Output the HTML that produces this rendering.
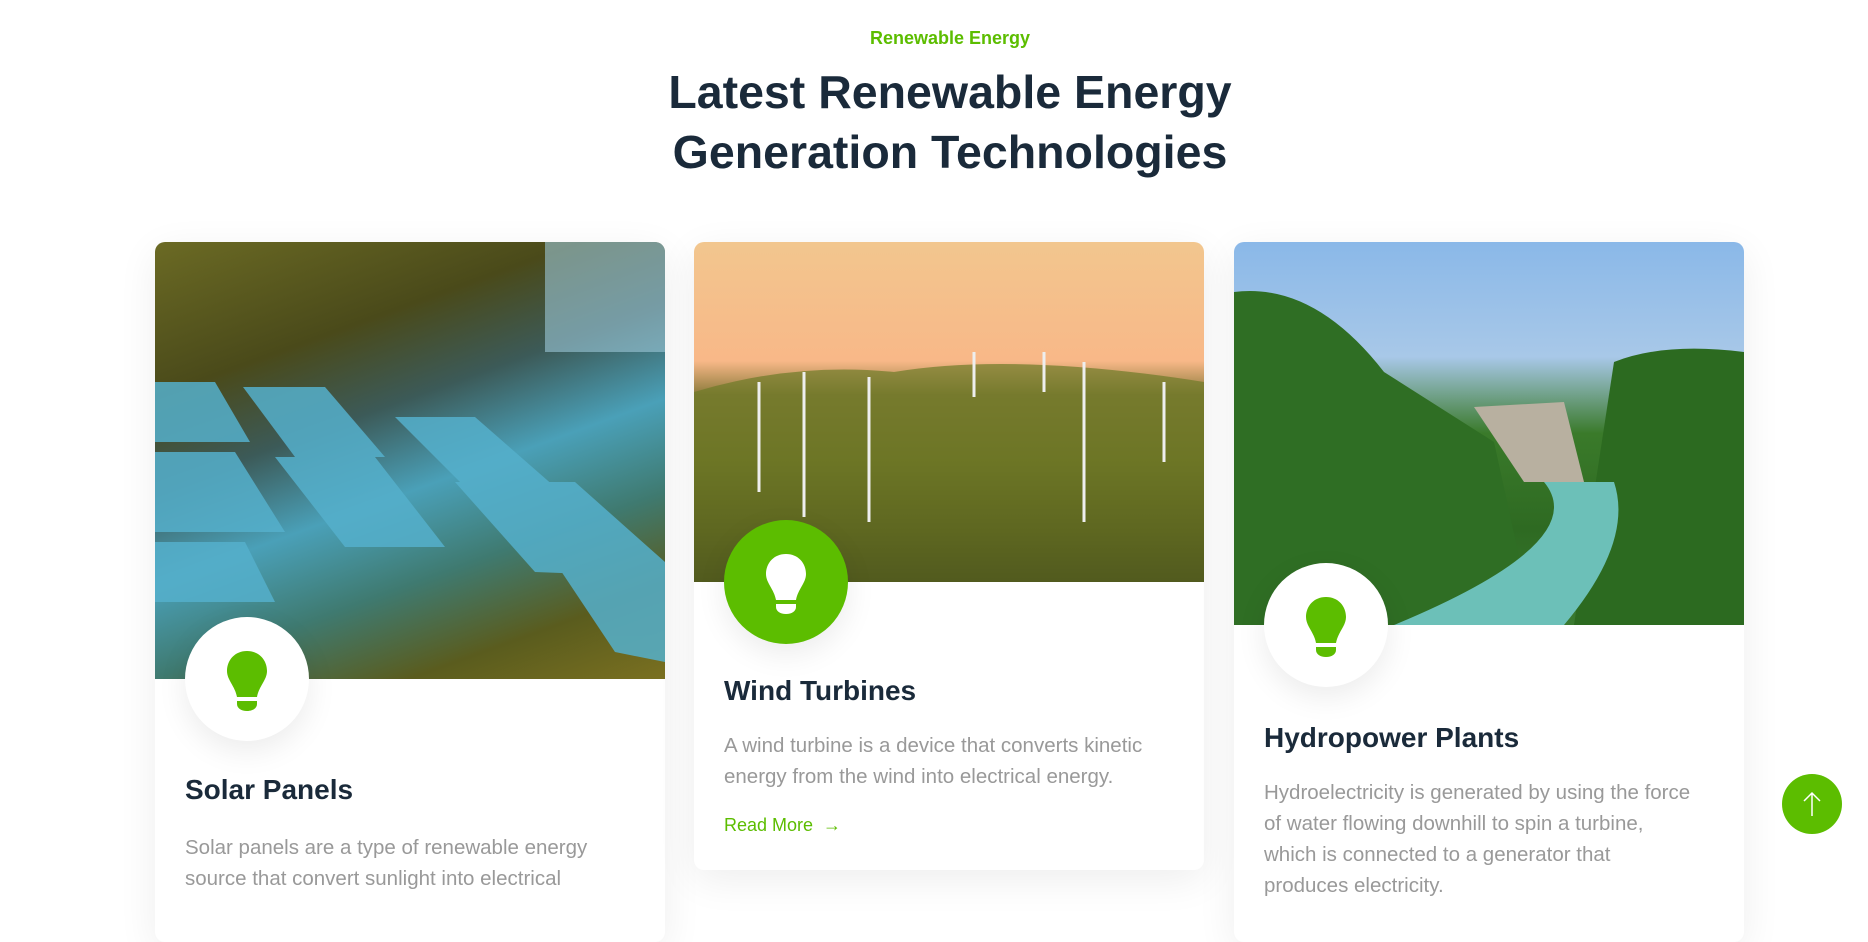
<!DOCTYPE html>
<html><head><meta charset="utf-8"><style>
*{margin:0;padding:0;box-sizing:border-box}
body{width:1868px;height:889px;overflow:hidden;background:#fff;font-family:"Liberation Sans",sans-serif;position:relative}
.sub{position:absolute;top:28px;left:0;width:1900px;text-align:center;color:#5cbd00;font-weight:bold;font-size:18px}
h1{position:absolute;top:62px;left:0;width:1900px;text-align:center;color:#1a2a3a;font-size:46.5px;line-height:60px;font-weight:bold}
.card{position:absolute;top:242px;width:510px;background:#fff;border-radius:10px;box-shadow:0 10px 40px rgba(0,0,0,.07);overflow:visible}
.img{position:absolute;left:0;top:0;width:510px;border-radius:10px 10px 0 0;overflow:hidden}
.ic{position:absolute;left:30px;width:124px;height:124px;border-radius:50%;background:#fff;box-shadow:0 10px 30px rgba(0,0,0,.08)}
.ic svg{position:absolute;left:40px;top:32px}
.card h3{position:absolute;left:30px;font-size:28px;color:#1a2a3a;font-weight:bold}
.card p{position:absolute;left:30px;width:432px;font-size:20.5px;line-height:31px;color:#999}
.rm{position:absolute;left:30px;color:#5cbd00;font-size:18px}
.top{position:absolute;left:1782px;top:774px;width:60px;height:60px;border-radius:50%;background:#5cbd00}
</style></head><body>
<div class="sub">Renewable Energy</div>
<h1>Latest Renewable Energy<br>Generation Technologies</h1>

<div class="card" style="left:155px;height:700px">
<div class="img" style="height:437px;background:linear-gradient(160deg,#6b6a24 0%,#4a4a1a 25%,#3c5a58 40%,#4aa0b8 55%,#3f7a70 70%,#5a5c1e 85%,#7a7020 100%)">
<svg width="510" height="437" style="position:absolute;left:0;top:0"><g fill="#55b0cc" opacity=".85"><polygon points="0,140 60,140 95,200 0,200"/><polygon points="88,145 170,145 230,215 140,215"/><polygon points="240,175 320,175 400,245 310,245"/><polygon points="0,210 80,210 130,290 0,290"/><polygon points="120,215 220,215 290,305 190,305"/><polygon points="300,240 420,240 510,320 510,335 380,330"/><polygon points="0,300 90,300 120,360 0,360"/><polygon points="400,320 510,330 510,420 460,410"/></g><rect x="390" y="0" width="120" height="110" fill="#9cc8d8" opacity=".6"/></svg>
</div>
<div class="ic" style="top:375px"><svg width="44" height="62" viewBox="0 0 44 62"><path d="M22 2C10 2 2 11 2 22c0 9 8 15 10 26h20c2-11 10-17 10-26C42 11 34 2 22 2z" fill="#5cbd00"/><path d="M12 52h20v3c0 4-4 7-10 7s-10-3-10-7z" fill="#5cbd00"/></svg></div>
<h3 style="top:532px">Solar Panels</h3>
<p style="top:590px">Solar panels are a type of renewable energy source that convert sunlight into electrical</p>
</div>

<div class="card" style="left:694px;height:628px">
<div class="img" style="height:340px;background:linear-gradient(180deg,#f2c68e 0%,#f8b888 35%,#8a7a3a 45%,#6a6a20 65%,#3a3a10 85%,#101008 100%)">
<svg width="510" height="340" style="position:absolute;left:0;top:0"><path d="M0 150 Q100 120 200 130 Q320 110 510 140 L510 340 L0 340Z" fill="#6d7a28" opacity=".7"/><g stroke="#eee" stroke-width="3"><line x1="65" y1="140" x2="65" y2="250"/><line x1="110" y1="130" x2="110" y2="275"/><line x1="175" y1="135" x2="175" y2="280"/><line x1="390" y1="120" x2="390" y2="280"/><line x1="470" y1="140" x2="470" y2="220"/><line x1="280" y1="110" x2="280" y2="155"/><line x1="350" y1="110" x2="350" y2="150"/></g></svg>
</div>
<div class="ic" style="top:278px;background:#5cbd00"><svg width="44" height="62" viewBox="0 0 44 62"><path d="M22 2C10 2 2 11 2 22c0 9 8 15 10 26h20c2-11 10-17 10-26C42 11 34 2 22 2z" fill="#fff"/><path d="M12 52h20v3c0 4-4 7-10 7s-10-3-10-7z" fill="#fff"/></svg></div>
<h3 style="top:433px">Wind Turbines</h3>
<p style="top:488px">A wind turbine is a device that converts kinetic energy from the wind into electrical energy.</p>
<div class="rm" style="top:573px">Read More &nbsp;<b>→</b></div>
</div>

<div class="card" style="left:1234px;height:700px">
<div class="img" style="height:383px;background:linear-gradient(180deg,#8ab8e8 0%,#a8c8e8 30%,#3a7a2a 50%,#2e6a22 75%,#3a7a30 100%)">
<svg width="510" height="383" style="position:absolute;left:0;top:0"><path d="M0 50 Q80 40 150 130 L260 200 L300 383 L0 383Z" fill="#2f6e24"/><path d="M380 120 Q430 100 510 110 L510 383 L340 383 Z" fill="#2c6a20"/><path d="M240 165 L330 160 L350 240 L290 240Z" fill="#b8b0a0"/><path d="M310 240 Q360 300 160 383 L330 383 Q400 300 380 240Z" fill="#6cc0b8"/></svg>
</div>
<div class="ic" style="top:321px"><svg width="44" height="62" viewBox="0 0 44 62"><path d="M22 2C10 2 2 11 2 22c0 9 8 15 10 26h20c2-11 10-17 10-26C42 11 34 2 22 2z" fill="#5cbd00"/><path d="M12 52h20v3c0 4-4 7-10 7s-10-3-10-7z" fill="#5cbd00"/></svg></div>
<h3 style="top:480px">Hydropower Plants</h3>
<p style="top:535px">Hydroelectricity is generated by using the force of water flowing downhill to spin a turbine, which is connected to a generator that produces electricity.</p>
</div>

<div class="top"><svg width="60" height="60"><path d="M30 42V19M22 27l8-8 8 8" stroke="#fff" stroke-width="1.5" fill="none"/></svg></div>
</body></html>
